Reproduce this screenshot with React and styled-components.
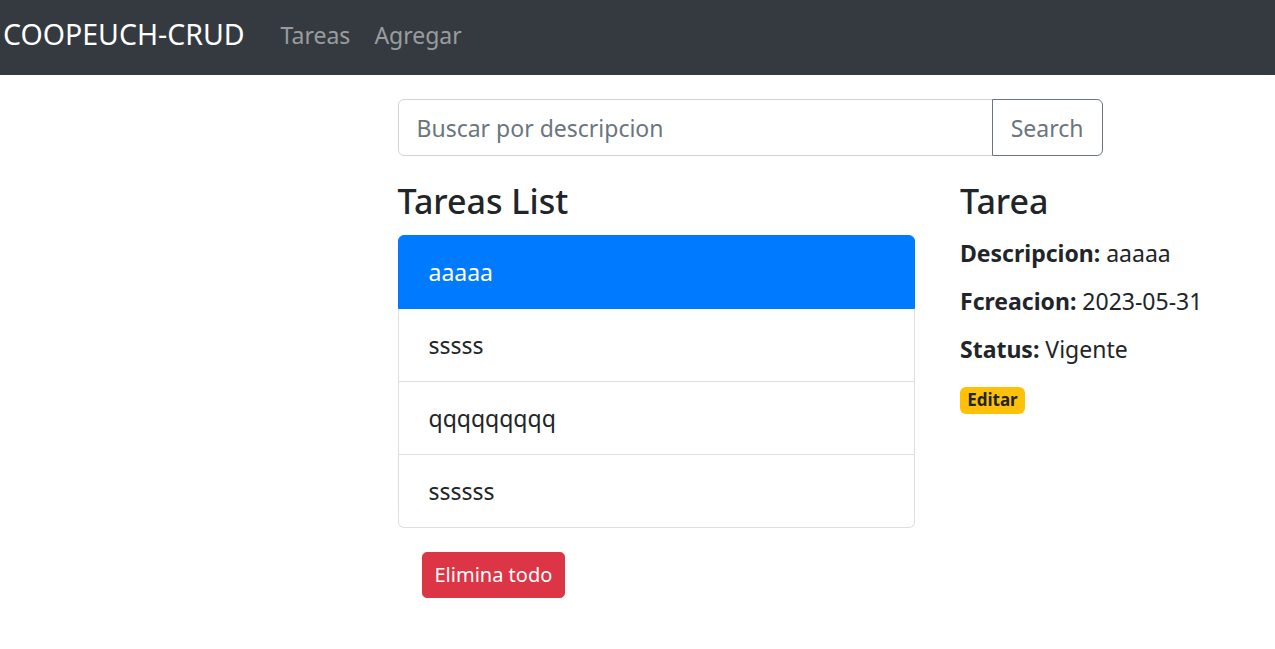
import React from 'react'
import styled, { createGlobalStyle } from 'styled-components'

const GlobalStyle = createGlobalStyle`
  body {
    margin: 0;
    font-family: "Noto Sans", "Open Sans", sans-serif;
    color: #212529;
    background: #fff;
    overflow-x: hidden;
  }
  * { box-sizing: border-box; }
`

const Navbar = styled.nav`
  height: 75px;
  background-color: #343a40;
  display: flex;
  align-items: center;
  padding: 0 0 6px 3px;
`
const Brand = styled.a`
  font-size: 28.5px;
  color: #fff;
  margin-right: 24px;
  line-height: 45px;
`
const NavLink = styled.a`
  font-size: 23px;
  padding: 0 12px;
  color: rgba(255, 255, 255, 0.5);
  line-height: 36px;
`

const Page = styled.div`
  width: 900px;
  margin: 24px 0 0 375px;
`
const Row = styled.div`
  display: flex;
  flex-wrap: wrap;
`
const Col = styled.div`
  width: ${p => p.$width}px;
  padding: 0 22.5px;
`

const InputGroup = styled.div`
  display: flex;
  margin-bottom: 24px;
`
const SearchInput = styled.input`
  flex: 1;
  min-width: 0;
  height: 57px;
  padding: 9px 18px;
  font-family: inherit;
  font-size: 23px;
  color: #495057;
  border: 1px solid #ced4da;
  border-radius: 6px 0 0 6px;
  outline: none;
  &::placeholder { color: #6c757d; }
`
const SearchButton = styled.button`
  height: 57px;
  padding: 9px 18px;
  font-family: inherit;
  font-size: 23px;
  color: #6c757d;
  background: transparent;
  border: 1px solid #6c757d;
  border-radius: 0 6px 6px 0;
  margin-left: -1px;
`

const Heading = styled.h4`
  font-size: 34px;
  font-weight: 500;
  line-height: 43.2px;
  margin: 0 0 12px;
`

const ListGroup = styled.ul`
  list-style: none;
  margin: 0;
  padding: 0;
`
const ListItem = styled.li`
  font-size: 23px;
  line-height: 36px;
  padding: 18px 30px;
  border: 1px solid ${p => (p.$active ? '#007bff' : 'rgba(0, 0, 0, 0.125)')};
  background: ${p => (p.$active ? '#007bff' : '#fff')};
  color: ${p => (p.$active ? '#fff' : '#212529')};
  & + & { border-top-width: 0; }
  &:first-child { border-radius: 6px 6px 0 0; }
  &:last-child { border-radius: 0 0 6px 6px; }
`

const DangerButton = styled.button`
  margin: 24px;
  padding: 6px 12px;
  font-family: inherit;
  font-size: 20px;
  line-height: 31.5px;
  color: #fff;
  background: #dc3545;
  border: 1px solid #dc3545;
  border-radius: 4.8px;
`

const Field = styled.div`
  font-size: 23px;
  line-height: 36px;
`
const Label = styled.label`
  display: inline-block;
  margin-bottom: 12px;
  strong { font-weight: 700; }
`
const Badge = styled.a`
  display: inline-block;
  font-size: 17px;
  font-weight: 700;
  line-height: 18px;
  padding: 4.5px 7.2px;
  border-radius: 6px;
  background: #ffc107;
  color: #212529;
`

const tareas = ['aaaaa', 'sssss', 'qqqqqqqqq', 'ssssss']

const App = () => {
  return (
    <>
      <GlobalStyle />
      <Navbar>
        <Brand>COOPEUCH-CRUD</Brand>
        <NavLink>Tareas</NavLink>
        <NavLink>Agregar</NavLink>
      </Navbar>
      <Page>
        <Row>
          <Col $width={750}>
            <InputGroup>
              <SearchInput placeholder="Buscar por descripcion" />
              <SearchButton>Search</SearchButton>
            </InputGroup>
          </Col>
          <Col $width={562.5}>
            <Heading>Tareas List</Heading>
            <ListGroup>
              {tareas.map((t, i) => (
                <ListItem key={i} $active={i === 0}>{t}</ListItem>
              ))}
            </ListGroup>
            <DangerButton>Elimina todo</DangerButton>
          </Col>
          <Col $width={337.5}>
            <Heading>Tarea</Heading>
            <Field>
              <Label><strong>Descripcion:</strong></Label> aaaaa
            </Field>
            <Field>
              <Label><strong>Fcreacion:</strong></Label> 2023-05-31
            </Field>
            <Field>
              <Label><strong>Status:</strong></Label> Vigente
            </Field>
            <Field>
              <Badge>Editar</Badge>
            </Field>
          </Col>
        </Row>
      </Page>
    </>
  )
}

export default App
